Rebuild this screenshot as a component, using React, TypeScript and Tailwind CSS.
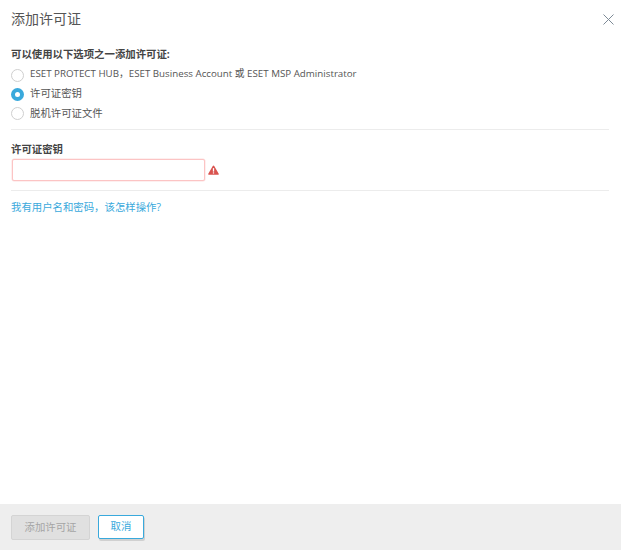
const font = "font-['Open_Sans','Noto_Sans_CJK_SC',sans-serif]";

const options = [
  { label: "ESET PROTECT HUB，ESET Business Account 或 ESET MSP Administrator", checked: false, size: "text-[9.75px] -mt-[2px]" },
  { label: "许可证密钥", checked: true, size: "text-[10.4px] -mt-px" },
  { label: "脱机许可证文件", checked: false, size: "text-[10.4px]" },
];

function Radio({ checked }: { checked: boolean }) {
  if (checked) {
    return (
      <span className="flex h-[13px] w-[13px] shrink-0 items-center justify-center rounded-full bg-[#39a9dc]">
        <span className="h-[5px] w-[5px] rounded-full bg-white" />
      </span>
    );
  }
  return <span className="h-[13px] w-[13px] shrink-0 rounded-full border border-[#cfcfcf] bg-white" />;
}

export default function App() {
  return (
    <div className={`flex h-[550px] w-[621px] flex-col bg-white text-[#444] ${font}`}>
      <div className="flex h-[40px] items-start justify-between pl-[11px] pr-[7px] pt-[9px]">
        <h1 className="text-[14px] leading-[20px] font-normal text-[#555]">添加许可证</h1>
        <svg width="11" height="11" viewBox="0 0 11 11" className="mt-[5px]" fill="none" stroke="#7d8a96" strokeWidth="1">
          <path d="M.5.5l10 10M10.5.5l-10 10" />
        </svg>
      </div>

      <div className="flex-1 pl-[11px] pr-[12px]">
        <div className="mt-[7px] text-[10.4px] leading-[14px] font-bold text-[#444]">可以使用以下选项之一添加许可证:</div>
        <div className="mt-[5px] flex flex-col">
          {options.map((o) => (
            <label key={o.label} className="flex h-[19px] items-center gap-[6px] text-[#555]">
              <Radio checked={o.checked} />
              <span className={o.size}>{o.label}</span>
            </label>
          ))}
        </div>
        <div className="mt-[6px] h-px bg-[#ececec]" />
        <div className="mt-[12px] text-[10.4px] leading-[14px] font-bold text-[#444]">许可证密钥</div>
        <div className="mt-[3px] flex items-center gap-[3px] pl-px">
          <input className="h-[22px] w-[193px] rounded-[2px] border border-[#fcc4c4] bg-white shadow-[0_0_0_0.5px_#fde0e0] outline-none" />
          <svg width="11" height="10" viewBox="0 0 12 10.5">
            <path d="M6 0.3a.9.9 0 0 1 .8.5l4.9 8.5a.7.7 0 0 1-.6 1H.9a.7.7 0 0 1-.6-1L5.2.8A.9.9 0 0 1 6 .3z" fill="#d9534f" />
            <rect x="5.3" y="3.2" width="1.4" height="3.8" fill="#fff" />
            <rect x="5.3" y="7.8" width="1.4" height="1.3" fill="#fff" />
          </svg>
        </div>
        <div className="mt-[9px] h-px bg-[#ececec]" />
        <a className="mt-[9px] block text-[10.4px] leading-[14px] text-[#39a9dc]">我有用户名和密码，该怎样操作?</a>
      </div>

      <div className="flex h-[46px] items-start gap-[8px] bg-[#eeeeee] pl-[11px] pt-[11px]">
        <button className="h-[25px] w-[79px] rounded-[2px] border border-[#d4d4d4] bg-[#e0e0e0] text-[10.4px] text-[#a5a5a5]">添加许可证</button>
        <button className="h-[24px] w-[46px] rounded-[2px] border border-[#39a9dc] bg-white text-[10.4px] text-[#39a9dc] shadow-[1px_2px_0_#d0d0d0]">取消</button>
      </div>
    </div>
  );
}
